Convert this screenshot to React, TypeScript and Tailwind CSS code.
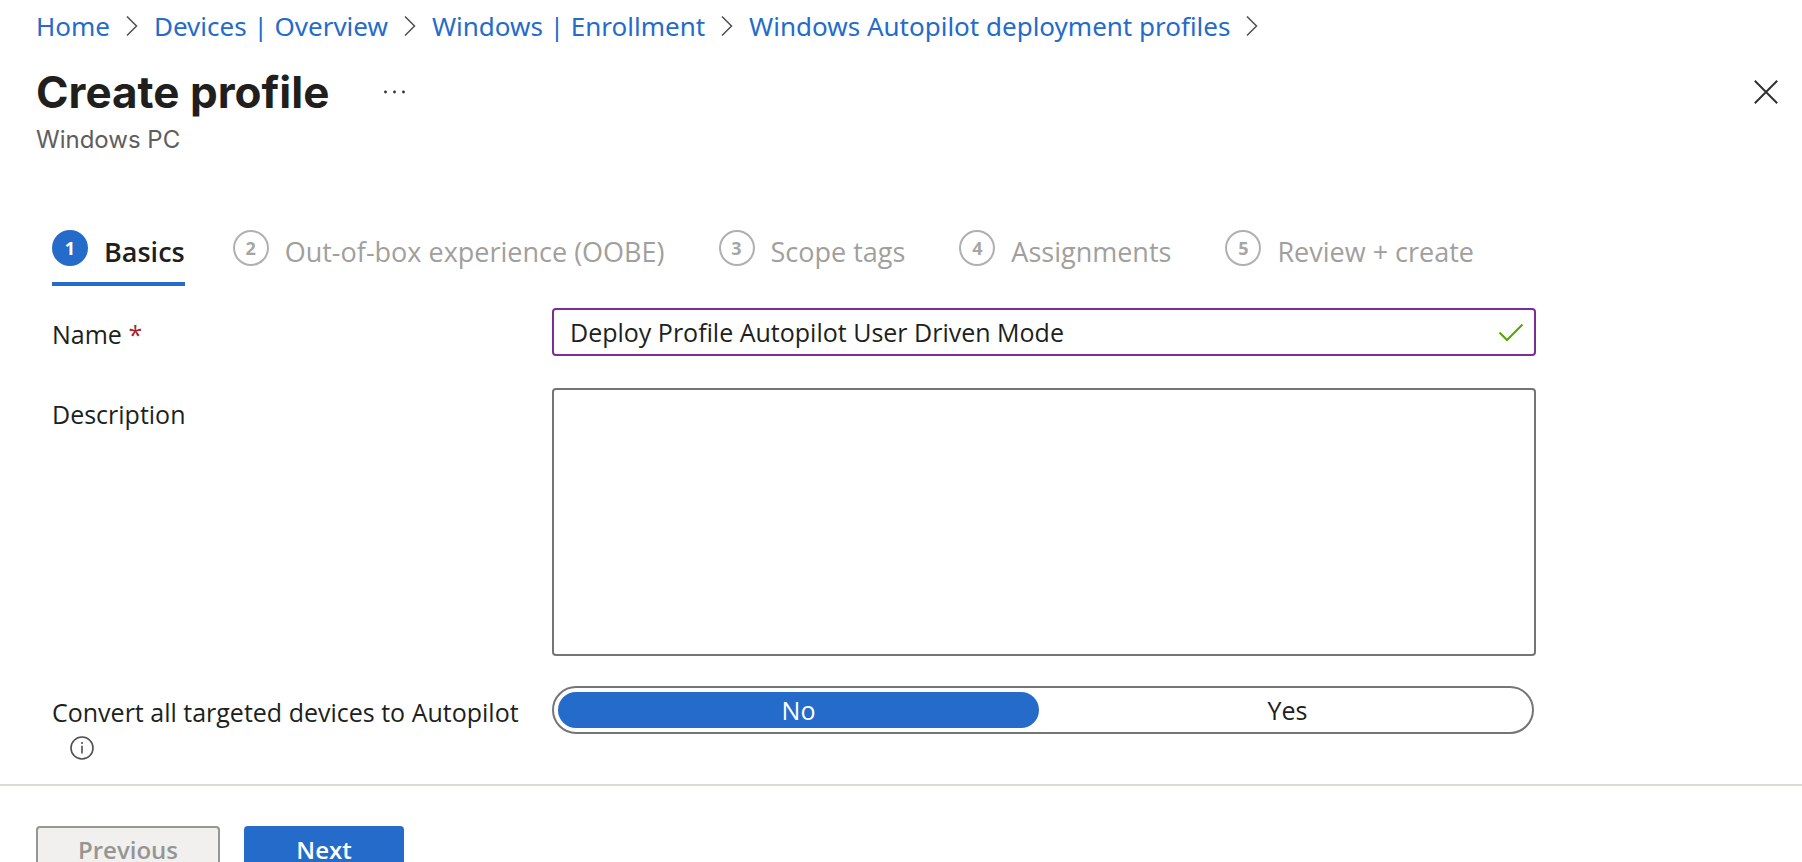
import React, { useState } from "react";

const crumbs = [
  "Home",
  "Devices | Overview",
  "Windows | Enrollment",
  "Windows Autopilot deployment profiles",
];

const steps = [
  "Basics",
  "Out-of-box experience (OOBE)",
  "Scope tags",
  "Assignments",
  "Review + create",
];

function Chevron() {
  return (
    <svg width="12" height="20" viewBox="0 0 12 20" fill="none" stroke="#4f4f4f" strokeWidth="1.5" aria-hidden="true">
      <path d="M1 0.5 L10.5 10 L1 19.5" />
    </svg>
  );
}

function Breadcrumbs() {
  return (
    <nav aria-label="Breadcrumb" className="pt-2">
      <ol className="flex items-center gap-4 whitespace-nowrap font-['Noto_Sans',sans-serif] text-[26px] leading-9">
        {crumbs.map((c) => (
          <li key={c} className="flex items-center gap-4">
            <a href="#" className="text-[#246bca]">
              {c}
            </a>
            <Chevron />
          </li>
        ))}
      </ol>
    </nav>
  );
}

function Header() {
  return (
    <header className="pt-5">
      <div className="flex items-center">
        <h1 className="font-['Inter','Liberation_Sans',sans-serif] text-[44px] font-bold leading-14 text-[#201f1e]">
          Create profile
        </h1>
        <button type="button" aria-label="More options" className="ml-12 p-1.5">
          <svg width="24" height="4" viewBox="0 0 24 4" fill="#323130">
            <circle cx="2.5" cy="2" r="1.4" />
            <circle cx="11.5" cy="2" r="1.4" />
            <circle cx="20.5" cy="2" r="1.4" />
          </svg>
        </button>
        <button type="button" aria-label="Close" className="ml-auto">
          <svg width="24" height="24" viewBox="0 0 24 24" fill="none" stroke="#323130" strokeWidth="2">
            <path d="M0.8 0.8 L23.2 23.2 M23.2 0.8 L0.8 23.2" />
          </svg>
        </button>
      </div>
      <p className="font-['Inter','Liberation_Sans',sans-serif] text-2xl leading-10 text-[#605e5c]">Windows PC</p>
    </header>
  );
}

function Steps() {
  return (
    <ol className="flex items-start gap-12 whitespace-nowrap pl-4 pt-[70px] text-[27px] leading-9">
      {steps.map((s, i) => {
        const active = i === 0;
        return (
          <li key={s}>
            <button
              type="button"
              aria-current={active ? "step" : undefined}
              className={
                active
                  ? "flex items-start gap-4 border-b-4 border-[#246bca] pb-3 font-semibold text-[#201f1e]"
                  : "flex items-start gap-4 border-b-4 border-transparent pb-3 pr-1.5 text-[#a19f9d]"
              }
            >
              <span
                className={
                  active
                    ? "flex size-9 items-center justify-center rounded-full bg-[#246bca] text-lg font-bold text-white"
                    : "flex size-9 items-center justify-center rounded-full border-2 border-[#b0b0b0] text-lg font-bold text-[#a6a6a6]"
                }
              >
                {i + 1}
              </span>
              <span className="pt-1">{s}</span>
            </button>
          </li>
        );
      })}
    </ol>
  );
}

function InfoIcon() {
  return (
    <svg width="24" height="24" viewBox="0 0 24 24" fill="none" stroke="#4f4f4f" strokeWidth="1.6">
      <circle cx="12" cy="12" r="11" />
      <path d="M12 9.8 V17.5" />
      <path d="M12 6 V8" />
    </svg>
  );
}

function ConvertToggle() {
  const [value, setValue] = useState("No");
  return (
    <div
      role="radiogroup"
      aria-labelledby="convert-label"
      className="mr-0.5 flex h-12 gap-2 rounded-full border-2 border-[#757575] p-1"
    >
      {["No", "Yes"].map((o) => (
        <label
          key={o}
          className={
            value === o
              ? "relative flex flex-1 items-center justify-center rounded-full bg-[#246bca] text-white"
              : "relative flex flex-1 items-center justify-center rounded-full"
          }
        >
          <input
            type="radio"
            name="convert"
            value={o}
            checked={value === o}
            onChange={() => setValue(o)}
            className="sr-only"
          />
          {o}
        </label>
      ))}
    </div>
  );
}

export default function App() {
  return (
    <div className="flex min-h-screen flex-col bg-white font-['Open_Sans','Noto_Sans',sans-serif] text-[#201f1e]">
      <main className="pb-6 pl-9 pr-6">
        <Breadcrumbs />
        <Header />
        <Steps />
        <form className="grid max-w-[1500px] grid-cols-[500px_1fr] pl-4 pt-[22px] text-[25px] leading-9">
          <label htmlFor="name" className="pt-2">
            Name <span className="text-[#a4262c]">*</span>
          </label>
          <div className="flex h-12 items-center rounded border-2 border-[#7b2d98] pl-4 pr-2.5">
            <input
              id="name"
              type="text"
              defaultValue="Deploy Profile Autopilot User Driven Mode"
              className="min-w-0 flex-1 outline-none"
            />
            <svg width="26" height="20" viewBox="0 0 26 20" fill="none" stroke="#57a300" strokeWidth="2" aria-hidden="true">
              <path d="M1.5 10.5 L9 18 L24.5 2.5" />
            </svg>
          </div>

          <label htmlFor="description" className="pt-10">
            Description
          </label>
          <textarea id="description" className="mt-8 h-67 resize-none rounded border-2 border-[#757575] px-4 py-1 outline-none" />

          <div className="pt-[38px]">
            <span id="convert-label">Convert all targeted devices to Autopilot</span>
            <button type="button" aria-label="More information" className="ml-4.5 mt-1.5 block">
              <InfoIcon />
            </button>
          </div>
          <div className="pt-[30px]">
            <ConvertToggle />
          </div>
        </form>
      </main>
      <footer className="flex gap-6 border-t-2 border-[#dadad6] px-9 pb-6 pt-10 text-2xl font-semibold">
        <button type="button" disabled className="h-12 w-46 rounded border-2 border-[#979593] bg-[#f1f0ee] text-[#979593]">
          Previous
        </button>
        <button type="button" className="h-12 w-40 rounded bg-[#246bca] text-white">
          Next
        </button>
      </footer>
    </div>
  );
}
